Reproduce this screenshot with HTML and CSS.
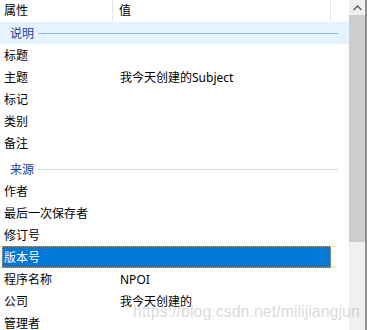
FILE: index.html
```html
<!doctype html>
<html lang="zh-cn">
  <head>
    <meta charset="utf-8">
    <title>属性</title>
    <link rel="stylesheet" href="styles.css">
  </head>
  <body>
    <div class="window">
      <div class="list">
        <div class="header">
          <div class="col col-name">属性</div>
          <div class="col col-value">值</div>
          <div class="col col-rest"></div>
        </div>

        <div class="group group-hot"><span>说明</span><i class="rule"></i></div>
        <div class="row"><span class="name">标题</span><span class="value"></span></div>
        <div class="row"><span class="name">主题</span><span class="value">我今天创建的Subject</span></div>
        <div class="row"><span class="name">标记</span><span class="value"></span></div>
        <div class="row"><span class="name">类别</span><span class="value"></span></div>
        <div class="row"><span class="name">备注</span><span class="value"></span></div>

        <div class="group"><span>来源</span><i class="rule"></i></div>
        <div class="row"><span class="name">作者</span><span class="value"></span></div>
        <div class="row"><span class="name">最后一次保存者</span><span class="value"></span></div>
        <div class="row"><span class="name">修订号</span><span class="value"></span></div>
        <div class="row selected"><span class="name">版本号</span><span class="value"></span></div>
        <div class="row"><span class="name">程序名称</span><span class="value">NPOI</span></div>
        <div class="row"><span class="name">公司</span><span class="value">我今天创建的</span></div>
        <div class="row"><span class="name">管理者</span><span class="value"></span></div>
      </div>

      <div class="scrollbar">
        <div class="arrow">
          <svg width="9" height="6" viewBox="0 0 9 6"><path d="M0.5 5 L4.5 1 L8.5 5" fill="none" stroke="#606060" stroke-width="1.5"/></svg>
        </div>
        <div class="thumb"></div>
        <div class="track"></div>
      </div>
      <div class="edge"></div>

      <div class="watermark">https://blog.csdn.net/milijiangjun</div>
    </div>
  </body>
</html>
```

FILE: styles.css
```css
body {
  margin: 0;
  padding: 0;
  background: #ffffff;
  font-family: "Noto Sans", "Noto Sans CJK SC", sans-serif;
  font-size: 12px;
  color: #000;
}

.window {
  position: relative;
  display: flex;
  width: 367px;
  height: 330px;
  overflow: hidden;
}

.list {
  width: 349px;
  flex: none;
}

/* header */
.header {
  display: flex;
  height: 22px;
  line-height: 21px;
}

.col {
  height: 21px;
  box-sizing: border-box;
}

.col-name {
  width: 113px;
  padding-left: 4px;
  border-right: 1px solid #e5e5e5;
}

.col-value {
  width: 218px;
  padding-left: 6px;
  border-right: 1px solid #e5e5e5;
}

/* group rows */
.group {
  display: flex;
  align-items: center;
  height: 22px;
  padding-left: 10px;
  color: #1e3c9a;
}

.group-hot {
  background: #e5f3ff;
}

.row + .group {
  margin-top: 4px;
}

.group .rule {
  width: 300px;
  height: 1px;
  margin-left: 4px;
  background: #d5dfeb;
}

.group-hot .rule {
  background: #99b4e6;
}

/* item rows */
.row {
  display: flex;
  height: 22px;
  box-sizing: border-box;
  padding-top: 2px;
  line-height: 20px;
  padding-left: 4px;
}

.row .name {
  width: 116px;
  flex: none;
}

.row.selected {
  width: 329px;
  margin-left: 2px;
  padding-left: 2px;
  color: #fff;
  background: #0078d7;
  outline: 1px dotted #e89a3c;
  outline-offset: -1px;
}

/* scrollbar */
.scrollbar {
  width: 16px;
  flex: none;
  display: flex;
  flex-direction: column;
  background: #f0f0f0;
}

.arrow {
  height: 15px;
  display: flex;
  align-items: center;
  justify-content: center;
}

.thumb {
  height: 227px;
  background: #cdcdcd;
}

.track {
  flex: 1;
}

.edge {
  width: 2px;
  flex: none;
  background: #8f8f8f;
}

.watermark {
  position: absolute;
  left: 133px;
  top: 303px;
  font-family: "Liberation Sans", Arial, sans-serif;
  font-size: 16px;
  color: rgba(170, 170, 170, 0.45);
  white-space: nowrap;
}
```
